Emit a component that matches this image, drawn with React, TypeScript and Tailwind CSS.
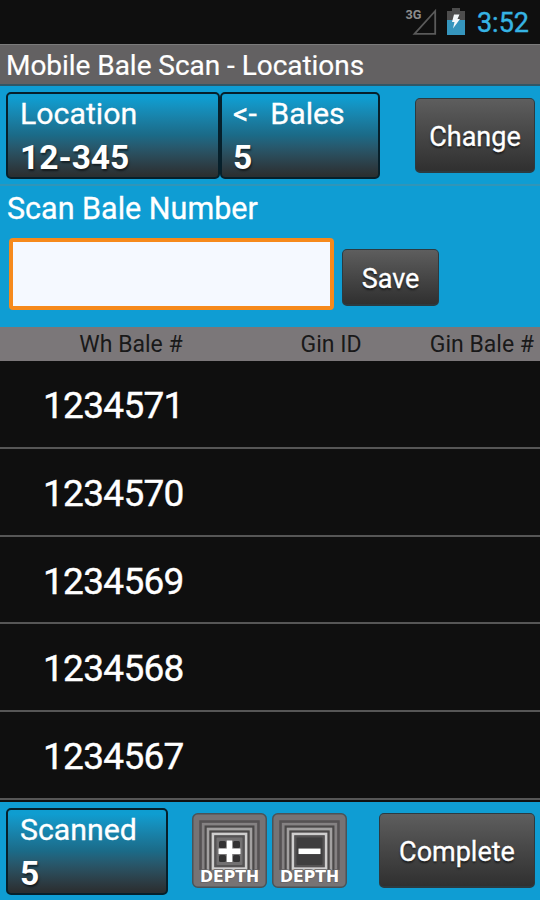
import { useState } from 'react'

const bales = ['1234571', '1234570', '1234569', '1234568', '1234567']

function StatusBar() {
  return (
    <div className="h-11 shrink-0 bg-[#0f0f0f] flex items-start justify-end pr-[11px]">
      <svg className="mt-0.5 mr-2.5" width="32" height="34" viewBox="0 -6 32 34">
        <text x="0.5" y="11" fill="#8c8c8c" fontSize="13.5" fontWeight="700" fontFamily="Roboto, sans-serif" textLength="16" lengthAdjust="spacingAndGlyphs">3G</text>
        <path d="M30.2 3V25.8H9.5Z" fill="none" stroke="#5a5a5a" strokeWidth="1.8" />
      </svg>
      <svg className="mt-2 mr-3" width="18" height="27" viewBox="0 0 18 27">
        <path d="M5 0h8v3h5v10H0V3h5Z" fill="#4d4d4d" />
        <path d="M0 12h18v15H0Z" fill="#3595bd" />
        <path d="M7 6.5h5.5L10.5 11H13L6 20.5l1.5-6.5H5Z" fill="#f4f8fa" />
      </svg>
      <span className="mt-[5px] text-[27px] leading-9 text-[#36b4e4] [-webkit-text-stroke:0.4px_#36b4e4]">3:52</span>
    </div>
  )
}

function InfoTile({ label, value, className }: { label: string; value: string; className: string }) {
  return (
    <div className={`h-[87px] rounded-[5px] border-2 border-[#06202b] bg-linear-to-b from-[#0f9dd0] from-5% via-[#1b6a87] via-50% to-[#2b2f31] to-98% pl-3 ${className}`}>
      <div className="mt-0.5 h-9 text-[30.3px] leading-9 [-webkit-text-stroke:0.3px_#fff]">{label}</div>
      <div className="mt-2 h-9 text-[33.5px] leading-9 font-bold [text-shadow:1px_2px_2px_#0008]">{value}</div>
    </div>
  )
}

function GrayButton({ text, className, onClick }: { text: string; className: string; onClick?: () => void }) {
  return (
    <button
      className={`rounded-[5px] border border-[#2c3a40] border-b-2 bg-linear-to-b from-[#5e5e5e] to-[#303030] pt-[5px] text-[27px] [-webkit-text-stroke:0.3px_#fff] [text-shadow:0_2px_2px_#0009] ${className}`}
      onClick={onClick}
    >
      {text}
    </button>
  )
}

function DepthButton({ plus }: { plus?: boolean }) {
  return (
    <button className="h-[75px] w-[75px] shrink-0">
      <svg width="75" height="75" viewBox="0 0 75 75">
        <rect x="0.75" y="0.75" width="73.5" height="73.5" rx="5" fill="#777374" stroke="#4a5357" strokeWidth="1.5" />
        <g fill="none">
          <path d="M8.5 57V8.5h58V57" stroke="#555253" strokeWidth="2.5" />
          <path d="M11.3 57V11.3h52.4V57" stroke="#858283" strokeWidth="2.5" />
          <path d="M13.7 57V13.7h47.6V57" stroke="#4b4949" strokeWidth="2.2" />
          <path d="M16.1 57V16.1h42.8V57" stroke="#a3a1a1" strokeWidth="2.6" />
          <path d="M18.5 57V18.5h38V57" stroke="#4b4949" strokeWidth="2.2" />
          <path d="M21 21h33v34.5H21Z" stroke="#cfcece" strokeWidth="2.6" />
        </g>
        <rect x="22.3" y="22.3" width="30.4" height="31.9" fill="#555354" />
        <rect x="24.5" y="24.5" width="26" height="27.5" rx="1" fill={plus ? '#737172' : '#3f3e3f'} />
        {plus && (
          <g fill="#333233">
            <rect x="27" y="28" width="7" height="7" rx="1.5" />
            <rect x="41" y="28" width="7" height="7" rx="1.5" />
            <rect x="27" y="42" width="7" height="7" rx="1.5" />
            <rect x="41" y="42" width="7" height="7" rx="1.5" />
          </g>
        )}
        {plus && <path d="M37.5 27.5v21.5" stroke="#fff" strokeWidth="5.5" />}
        <path d="M26.5 38.3h22" stroke="#fff" strokeWidth="5.5" />
        <text x="8" y="69" fill="#fff" stroke="#666364" strokeWidth="1.5" paintOrder="stroke" fontSize="16.5" fontWeight="700" fontFamily="DejaVu Sans, sans-serif" textLength="59" lengthAdjust="spacingAndGlyphs">DEPTH</text>
      </svg>
    </button>
  )
}

export default function App() {
  const [bale, setBale] = useState('')

  return (
    <div className="w-[540px] h-[900px] overflow-hidden flex flex-col bg-[#0f9dd3] text-white font-[Roboto,sans-serif]">
      <StatusBar />
      <div className="h-[42px] shrink-0 border-t border-b-2 border-t-[#7b7b7b] border-b-[#315766] bg-[#636162] pl-1.5 text-[28px] leading-[41px] tracking-[-0.04px] [-webkit-text-stroke:0.2px_#fff]">
        Mobile Bale Scan - Locations
      </div>

      <div className="h-[100px] shrink-0 flex items-start border-b-2 border-[#3195b8] pl-1.5 pr-[5px] pt-1.5">
        <InfoTile label="Location" value="12-345" className="w-[214px]" />
        <InfoTile label="<- Bales" value="5" className="w-[160px] pl-[11px]! [word-spacing:6px]" />
        <GrayButton text="Change" className="ml-auto mt-1.5 h-[75px] w-[120px]" />
      </div>

      <div className="h-[141px] shrink-0 pl-[7px]">
        <div className="pt-[5px] h-[52px] text-[30.5px] leading-9 [-webkit-text-stroke:0.3px_#fff]">Scan Bale Number</div>
        <div className="flex items-start pl-0.5">
          <input
            className="h-[72px] w-[325px] rounded-[4px] border-4 border-[#f68a1c] bg-[#f5f9ff] px-3 text-[28px] text-black outline-none"
            value={bale}
            onChange={e => setBale(e.target.value)}
          />
          <GrayButton text="Save" className="ml-2 mt-[11px] h-[57px] w-[97px]" onClick={() => setBale('')} />
        </div>
      </div>

      <div className="h-[34px] shrink-0 flex items-center bg-[#7b7779] pt-[3px] text-[23px] text-[#191919]">
        <span className="w-[262px] text-center">Wh Bale #</span>
        <span className="w-[138px] text-center">Gin ID</span>
        <span className="ml-auto pr-1.5">Gin Bale #</span>
      </div>

      <div className="h-[441px] shrink-0 border-b-2 border-[#111] bg-[#0f0f0f]">
        {bales.map(b => (
          <div key={b} className="h-[87.75px] border-b-2 border-[#565656] pl-[43px] text-[37px] leading-[90px] tracking-[-0.7px] [-webkit-text-stroke:0.4px_#fff]">
            {b}
          </div>
        ))}
      </div>

      <div className="flex-1 flex items-start pl-1.5 pr-[5px] pt-1.5">
        <InfoTile label="Scanned" value="5" className="w-[162px]" />
        <div className="ml-6 mt-[5px] flex gap-[5px]">
          <DepthButton plus />
          <DepthButton />
        </div>
        <GrayButton text="Complete" className="ml-auto mt-[5px] h-[75px] w-[156px]" />
      </div>
    </div>
  )
}
